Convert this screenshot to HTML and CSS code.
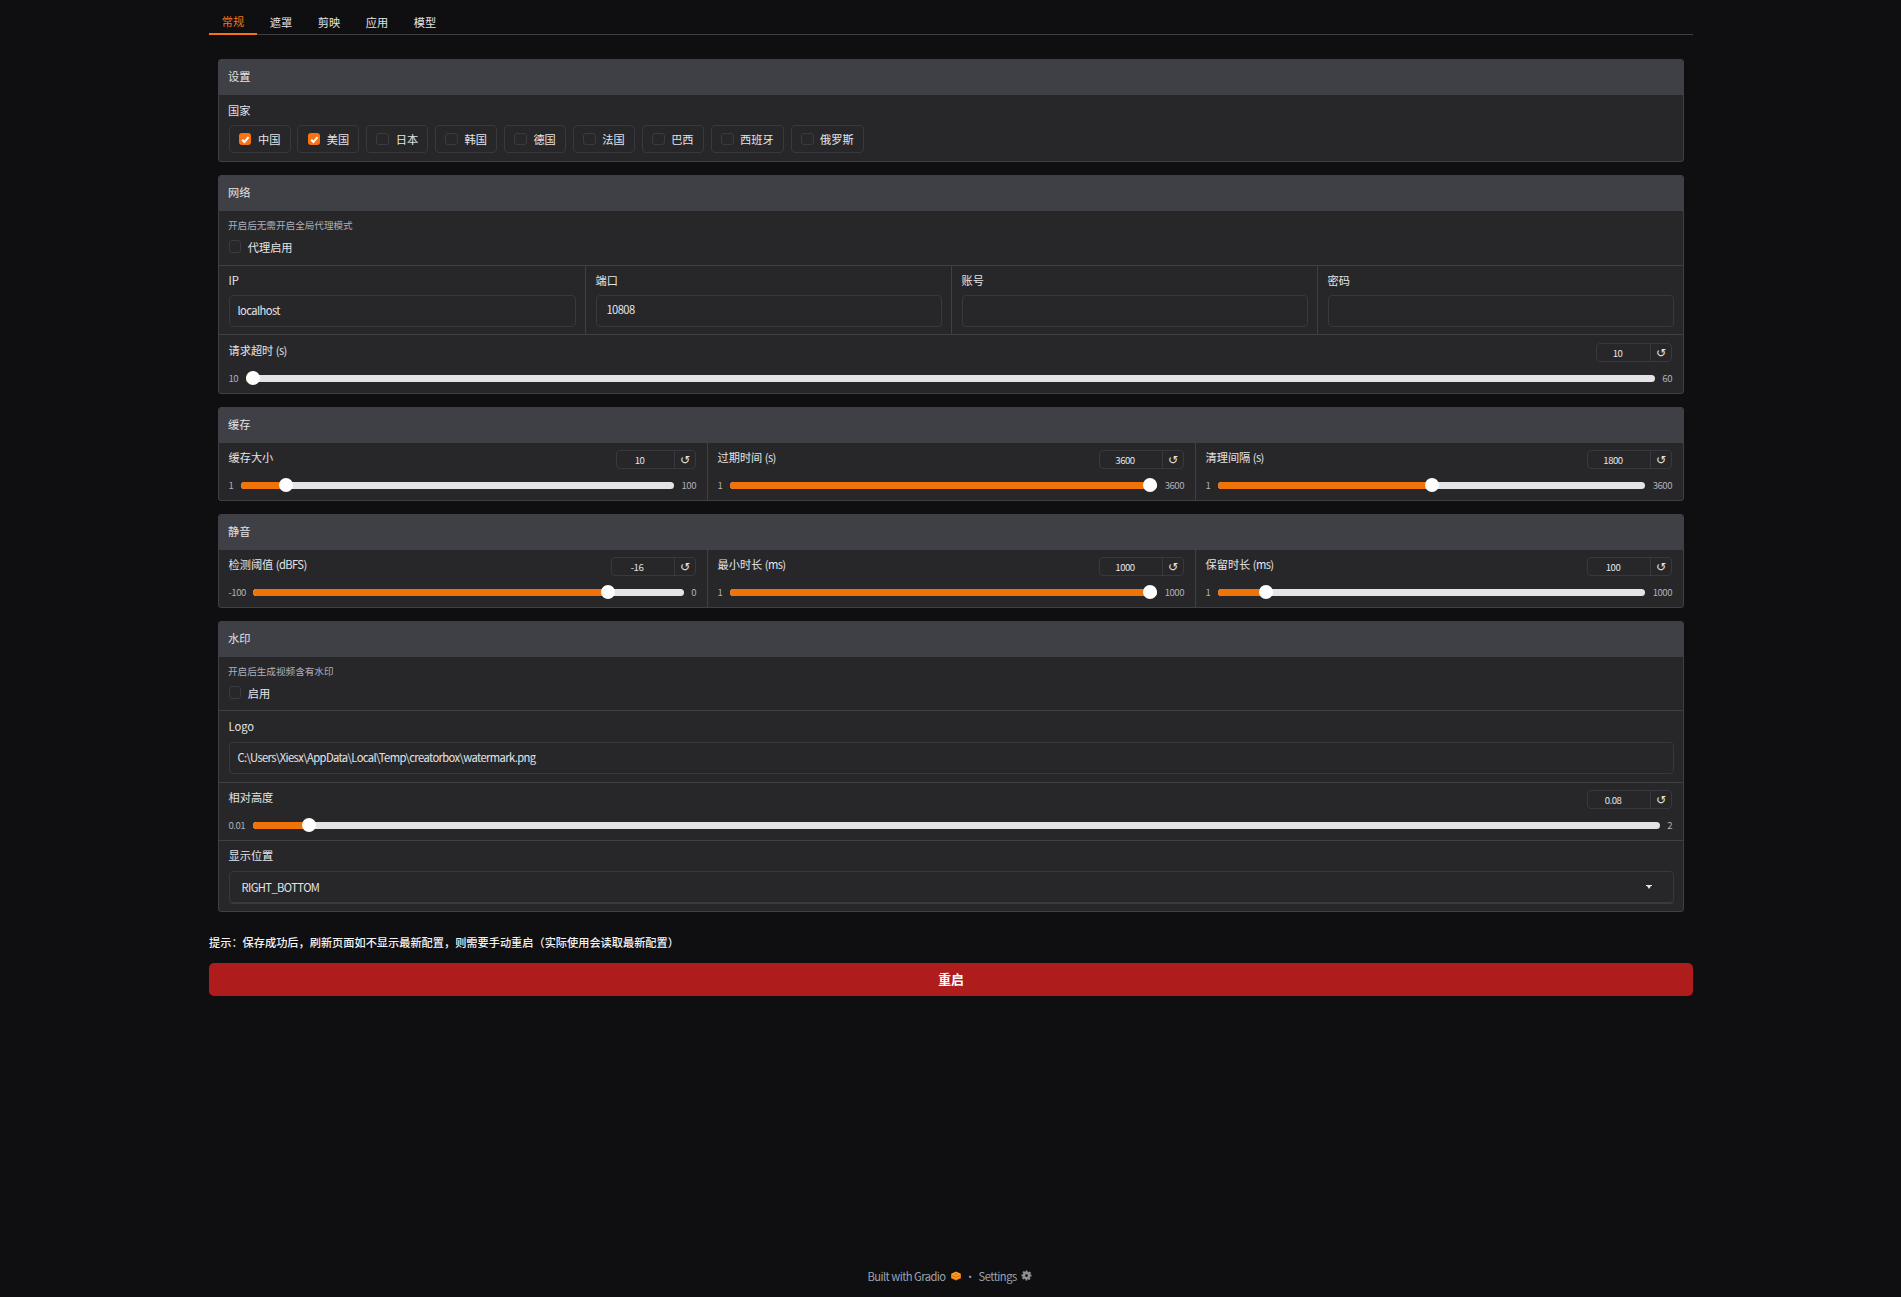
FILE: index.html
```html
<!DOCTYPE html>
<html lang="zh-CN">
<head>
    <meta charset="UTF-8">
    <meta name="viewport" content="width=device-width, initial-scale=1.0">
    <title>设置</title>
    <link rel="stylesheet" href="styles.css">
</head>
<body>
    <div class="app">
        <nav class="tabs">
            <button class="tab tab-active">常规</button>
            <button class="tab">遮罩</button>
            <button class="tab">剪映</button>
            <button class="tab">应用</button>
            <button class="tab">模型</button>
        </nav>

        <div class="panels">
            <section class="panel">
                <h2 class="panel-title">设置</h2>
                <div class="block">
                    <div class="label">国家</div>
                    <div class="choices">
                        <div class="choice"><span class="check check-on"><svg viewBox="0 0 12 12"><path d="M3 6.3l2.1 2.1L9 3.9"/></svg></span>中国</div>
                        <div class="choice"><span class="check check-on"><svg viewBox="0 0 12 12"><path d="M3 6.3l2.1 2.1L9 3.9"/></svg></span>美国</div>
                        <div class="choice"><span class="check"></span>日本</div>
                        <div class="choice"><span class="check"></span>韩国</div>
                        <div class="choice"><span class="check"></span>德国</div>
                        <div class="choice"><span class="check"></span>法国</div>
                        <div class="choice"><span class="check"></span>巴西</div>
                        <div class="choice"><span class="check"></span>西班牙</div>
                        <div class="choice"><span class="check"></span>俄罗斯</div>
                    </div>
                </div>
            </section>

            <section class="panel">
                <h2 class="panel-title">网络</h2>
                <div class="block block-toggle">
                    <div class="info">开启后无需开启全局代理模式</div>
                    <div class="toggle"><span class="check"></span>代理启用</div>
                </div>
                <div class="row row-4 ruled">
                    <div class="field">
                        <div class="label">IP</div>
                        <div class="input">localhost</div>
                    </div>
                    <div class="field">
                        <div class="label">端口</div>
                        <div class="input input-num">10808</div>
                    </div>
                    <div class="field">
                        <div class="label">账号</div>
                        <div class="input"></div>
                    </div>
                    <div class="field">
                        <div class="label">密码</div>
                        <div class="input"></div>
                    </div>
                </div>
                <div class="slider-block ruled">
                    <div class="slider-head">
                        <div class="label">请求超时 <span class="en">(s)</span></div>
                        <div class="number w-76"><span class="number-val">10</span><span class="reset">↺</span></div>
                    </div>
                    <div class="slider">
                        <span class="limit">10</span>
                        <div class="track">
                            <div class="fill" style="width: 7px"></div>
                            <div class="thumb" style="left: 0px"></div>
                        </div>
                        <span class="limit">60</span>
                    </div>
                </div>
            </section>

            <section class="panel">
                <h2 class="panel-title">缓存</h2>
                <div class="row row-3">
                    <div class="slider-block">
                        <div class="slider-head">
                            <div class="label">缓存大小</div>
                            <div class="number w-80"><span class="number-val">10</span><span class="reset">↺</span></div>
                        </div>
                        <div class="slider">
                            <span class="limit">1</span>
                            <div class="track">
                                <div class="fill" style="width: 45px"></div>
                                <div class="thumb" style="left: 38px"></div>
                            </div>
                            <span class="limit">100</span>
                        </div>
                    </div>
                    <div class="slider-block">
                        <div class="slider-head">
                            <div class="label">过期时间 <span class="en">(s)</span></div>
                            <div class="number w-85"><span class="number-val">3600</span><span class="reset">↺</span></div>
                        </div>
                        <div class="slider">
                            <span class="limit">1</span>
                            <div class="track">
                                <div class="fill" style="width: 420px"></div>
                                <div class="thumb" style="left: 413px"></div>
                            </div>
                            <span class="limit">3600</span>
                        </div>
                    </div>
                    <div class="slider-block">
                        <div class="slider-head">
                            <div class="label">清理间隔 <span class="en">(s)</span></div>
                            <div class="number w-85"><span class="number-val">1800</span><span class="reset">↺</span></div>
                        </div>
                        <div class="slider">
                            <span class="limit">1</span>
                            <div class="track">
                                <div class="fill" style="width: 214px"></div>
                                <div class="thumb" style="left: 207px"></div>
                            </div>
                            <span class="limit">3600</span>
                        </div>
                    </div>
                </div>
            </section>

            <section class="panel">
                <h2 class="panel-title">静音</h2>
                <div class="row row-3">
                    <div class="slider-block">
                        <div class="slider-head">
                            <div class="label">检测阈值 <span class="en">(dBFS)</span></div>
                            <div class="number w-85"><span class="number-val">-16</span><span class="reset">↺</span></div>
                        </div>
                        <div class="slider">
                            <span class="limit">-100</span>
                            <div class="track">
                                <div class="fill" style="width: 355px"></div>
                                <div class="thumb" style="left: 348px"></div>
                            </div>
                            <span class="limit">0</span>
                        </div>
                    </div>
                    <div class="slider-block">
                        <div class="slider-head">
                            <div class="label">最小时长 <span class="en">(ms)</span></div>
                            <div class="number w-85"><span class="number-val">1000</span><span class="reset">↺</span></div>
                        </div>
                        <div class="slider">
                            <span class="limit">1</span>
                            <div class="track">
                                <div class="fill" style="width: 420px"></div>
                                <div class="thumb" style="left: 413px"></div>
                            </div>
                            <span class="limit">1000</span>
                        </div>
                    </div>
                    <div class="slider-block">
                        <div class="slider-head">
                            <div class="label">保留时长 <span class="en">(ms)</span></div>
                            <div class="number w-85"><span class="number-val">100</span><span class="reset">↺</span></div>
                        </div>
                        <div class="slider">
                            <span class="limit">1</span>
                            <div class="track">
                                <div class="fill" style="width: 48px"></div>
                                <div class="thumb" style="left: 41px"></div>
                            </div>
                            <span class="limit">1000</span>
                        </div>
                    </div>
                </div>
            </section>

            <section class="panel">
                <h2 class="panel-title">水印</h2>
                <div class="block block-toggle block-compact">
                    <div class="info">开启后生成视频含有水印</div>
                    <div class="toggle"><span class="check"></span>启用</div>
                </div>
                <div class="field field-logo ruled">
                    <div class="label">Logo</div>
                    <div class="input">C:\Users\Xiesx\AppData\Local\Temp\creatorbox\watermark.png</div>
                </div>
                <div class="slider-block slider-compact ruled">
                    <div class="slider-head">
                        <div class="label">相对高度</div>
                        <div class="number w-85"><span class="number-val">0.08</span><span class="reset">↺</span></div>
                    </div>
                    <div class="slider">
                        <span class="limit">0.01</span>
                        <div class="track">
                            <div class="fill" style="width: 56px"></div>
                            <div class="thumb" style="left: 49px"></div>
                        </div>
                        <span class="limit">2</span>
                    </div>
                </div>
                <div class="field field-select ruled">
                    <div class="label">显示位置</div>
                    <div class="input select">
                        <span>RIGHT_BOTTOM</span>
                        <svg class="caret" viewBox="0 0 6 4"><path d="M0 0h6v1H5L3 4 1 1H0z"/></svg>
                    </div>
                </div>
            </section>
        </div>

        <p class="hint">提示：保存成功后，刷新页面如不显示最新配置，则需要手动重启（实际使用会读取最新配置）</p>
        <button class="restart">重启</button>
    </div>

    <footer class="footer">
        <span class="footer-text">Built with Gradio</span>
        <svg class="logo" viewBox="0 0 12 10">
            <path d="M6 .4l5 2.4v4.4L6 9.6 1 7.2V2.8z" fill="#e8730c"/>
            <path d="M2.2 3.2L6 1.6l3.8 1.6L6 4.9zM1.8 5.7L6 7.7l4.2-2" fill="none" stroke="#fcc22e" stroke-width=".9"/>
        </svg>
        <span class="footer-dot">·</span>
        <span class="footer-text">Settings</span>
        <svg class="gear" viewBox="0 0 24 24">
            <path d="M10 1h4l.6 3.2 1.8.8 2.7-1.8 2.8 2.8-1.8 2.7.8 1.8L23 10v4l-3.2.6-.8 1.8 1.8 2.7-2.8 2.8-2.7-1.8-1.8.8L14 23h-4l-.6-3.2-1.8-.8-2.7 1.8-2.8-2.8 1.8-2.7-.8-1.8L1 14v-4l3.2-.6.8-1.8-1.8-2.7 2.8-2.8 2.7 1.8 1.8-.8zM12 9a3 3 0 100 6 3 3 0 000-6z" fill-rule="evenodd"/>
        </svg>
    </footer>
</body>
</html>
```

FILE: styles.css
```css
* {
    box-sizing: border-box;
}
html, body {
    height: 100%;
}
body {
    margin: 0;
    padding-left: 1px;
    background-color: #0f0f11;
    color: #e4e4e7;
    font-family: "Noto Sans CJK SC", sans-serif;
    font-size: 11.2px;
    display: flex;
    flex-direction: column;
}
.app {
    width: 1484px;
    margin: 0 auto;
    flex: 1;
}
.en {
    letter-spacing: -0.6px;
}

/* tabs */
.tabs {
    display: flex;
    height: 35px;
    border-bottom: 1px solid #3f3f46;
    padding-top: 11px;
}
.tab {
    width: 48px;
    height: 24px;
    padding: 0 0 3px;
    border: none;
    background: none;
    color: #e4e4e7;
    font: inherit;
    line-height: 16px;
    text-align: center;
}
.tab-active {
    color: #f97316;
    border-bottom: 2px solid #f97316;
}

/* panels */
.panels {
    margin-top: 24px;
    padding: 0 9px;
    display: flex;
    flex-direction: column;
    gap: 12.8px;
}
.panel {
    border: 1px solid #3f3f46;
    border-radius: 3px;
    background-color: #27272a;
    overflow: hidden;
}
.panel-title {
    margin: 0;
    height: 35px;
    padding: 0 9px;
    background-color: #3f4046;
    color: #e4e4e7;
    font-size: 11.2px;
    font-weight: 400;
    line-height: 33px;
}
.ruled {
    border-top: 1px solid #3f3f46;
}
.block {
    padding: 7.5px 10px 8px 9px;
}
.block-toggle {
    height: 54px;
}
.block-compact {
    height: 53px;
}
.label {
    line-height: 15px;
    color: #e4e4e7;
}
.info {
    font-size: 9.6px;
    line-height: 15px;
    color: #b0b0b8;
}
.choices {
    display: flex;
    gap: 6.8px;
    margin-top: 7.5px;
    padding-left: 0.5px;
}
.choice {
    display: flex;
    align-items: center;
    gap: 6.5px;
    height: 28px;
    padding: 0 9.2px;
    border: 1px solid #38383d;
    border-radius: 4px;
}
.check {
    display: block;
    width: 12.8px;
    height: 12.8px;
    border: 1px solid #3a3a40;
    border-radius: 3px;
    background-color: #27272a;
}
.check svg {
    display: block;
    width: 100%;
    height: 100%;
}
.check svg path {
    fill: none;
    stroke: #fff;
    stroke-width: 1.9;
}
.check-on {
    border: none;
    background-color: #f97316;
}
.toggle {
    display: flex;
    align-items: center;
    gap: 6.5px;
    height: 14px;
    margin-top: 6.5px;
    padding-left: 0.5px;
}

/* grid rows */
.row {
    display: grid;
}
.row-4 {
    grid-template-columns: repeat(4, 1fr);
}
.row-3 {
    grid-template-columns: repeat(3, 1fr);
}
.row > * + * {
    border-left: 1px solid #3f3f46;
}
.field {
    padding: 7px 9.5px 7px 9.5px;
}
.field .input {
    margin-top: 7px;
}
.field-logo {
    padding-top: 8.5px;
    padding-bottom: 8.3px;
}
.field-logo .input {
    height: 32px;
    margin-top: 7.2px;
}
.field-select {
    padding-top: 7.5px;
    padding-bottom: 7.7px;
}
.field-select .input {
    height: 32.5px;
    margin-top: 7.5px;
}
.input {
    height: 32.5px;
    padding: 0 8px;
    border: 1px solid #38383d;
    border-radius: 4px;
    line-height: 29px;
    color: #e4e4e7;
    letter-spacing: -0.6px;
}
.input-num {
    padding-left: 10px;
    line-height: 27px;
}
.select {
    display: flex;
    align-items: center;
    justify-content: space-between;
    padding: 0 21px 0 12px;
    box-shadow: 0 1px 0 #3a3a3f;
}
.caret {
    width: 6px;
    height: 4px;
    fill: #e4e4e7;
}

/* sliders */
.slider-block {
    padding: 8px 11px 8px 9.5px;
}
.row-3 .slider-block {
    padding-top: 7px;
    padding-bottom: 7.8px;
}
.slider-compact {
    padding-top: 7.4px;
    padding-bottom: 7.4px;
}
.slider-head {
    display: flex;
    justify-content: space-between;
    align-items: flex-start;
}
.slider-head .label {
    margin-top: -0.5px;
}
.number {
    display: flex;
    height: 19.2px;
    border: 1px solid #38383d;
    border-radius: 4px;
    font-size: 9.6px;
    line-height: 19.5px;
}
.w-76 { width: 76px; }
.w-80 { width: 80px; }
.w-85 { width: 85px; }
.number-val {
    flex: 1;
    padding-right: 12px;
    text-align: center;
    letter-spacing: -0.5px;
}
.reset {
    width: 21px;
    border-left: 1px solid #38383d;
    font-family: "DejaVu Sans", sans-serif;
    font-size: 12px;
    line-height: 19px;
    text-align: center;
}
.slider {
    display: flex;
    align-items: center;
    gap: 7.5px;
    height: 14px;
    margin-top: 9px;
}
.limit {
    font-size: 9.6px;
    color: #b0b0b8;
    letter-spacing: -0.5px;
}
.track {
    position: relative;
    flex: 1;
    height: 7px;
    border-radius: 4px;
    background-color: #e4e4e7;
}
.fill {
    height: 100%;
    border-radius: 4px 0 0 4px;
    background-color: #f0730a;
}
.thumb {
    position: absolute;
    top: -3.5px;
    width: 14px;
    height: 14px;
    border-radius: 50%;
    background-color: #fff;
}

/* bottom */
.hint {
    margin: 21px 0 0;
    line-height: 18px;
    color: #f4f4f5;
    font-weight: 500;
}
.restart {
    display: block;
    width: 100%;
    height: 32.5px;
    margin-top: 12.5px;
    padding: 0 0 2px;
    border: none;
    border-radius: 5px;
    background-color: #ae1c1c;
    color: #fff;
    font: inherit;
    font-size: 12.8px;
    font-weight: 600;
}
.footer {
    display: flex;
    justify-content: center;
    align-items: center;
    height: 41px;
    padding: 0 3px 1.5px 0;
    color: #9ca3af;
}
.footer-text {
    letter-spacing: -0.55px;
}
.logo {
    width: 12px;
    height: 10px;
    margin-left: 4px;
}
.footer-dot {
    width: 3px;
    margin: 0 7px;
    display: flex;
    justify-content: center;
}
.gear {
    width: 11px;
    height: 11px;
    margin-left: 4px;
    fill: #8f8f96;
}
```
